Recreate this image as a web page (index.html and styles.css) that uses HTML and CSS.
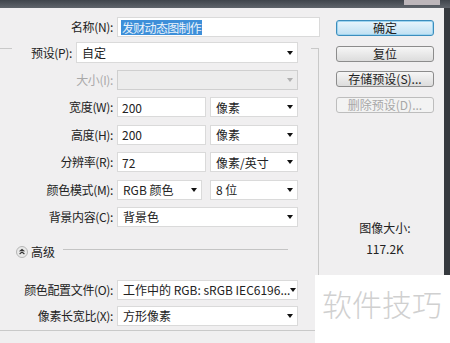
FILE: index.html
```html
<!DOCTYPE html>
<html lang="zh-CN">
<head>
    <meta charset="UTF-8">
    <title>新建</title>
    <link rel="stylesheet" href="styles.css">
</head>
<body>
    <div class="titlebar"><span class="titlebar-btn"></span></div>

    <div class="dialog">
        <div class="main">
            <div class="row name-row">
                <label class="lbl">名称(N):</label>
                <div class="field name-field"><span class="sel-text">发财动态图制作</span></div>
            </div>

            <fieldset class="group">
                <legend class="preset">
                    <label class="lbl preset-lbl">预设(P):</label>
                    <div class="field select preset-select">自定<i class="arrow"></i></div>
                </legend>

                <div class="rows">
                    <label class="lbl disabled">大小(I):</label>
                    <div class="field select is-disabled"><i class="arrow"></i></div>

                    <label class="lbl">宽度(W):</label>
                    <div class="pair">
                        <div class="field input">200</div>
                        <div class="field select unit">像素<i class="arrow"></i></div>
                    </div>

                    <label class="lbl">高度(H):</label>
                    <div class="pair">
                        <div class="field input">200</div>
                        <div class="field select unit">像素<i class="arrow"></i></div>
                    </div>

                    <label class="lbl">分辨率(R):</label>
                    <div class="pair">
                        <div class="field input">72</div>
                        <div class="field select unit">像素/英寸<i class="arrow"></i></div>
                    </div>

                    <label class="lbl">颜色模式(M):</label>
                    <div class="pair mode">
                        <div class="field select mode-select">RGB 颜色<i class="arrow"></i></div>
                        <div class="field select unit">8 位<i class="arrow"></i></div>
                    </div>

                    <label class="lbl">背景内容(C):</label>
                    <div class="field select">背景色<i class="arrow"></i></div>
                </div>

                <div class="advanced">
                    <svg class="adv-icon" width="12" height="12" viewBox="0 0 12 12">
                        <circle cx="6" cy="6" r="5.5" fill="#e9e9e9" stroke="#b5b5b5"/>
                        <path d="M3.6 5.4 L6 3.4 L8.4 5.4 M3.6 8 L6 6 L8.4 8" fill="none" stroke="#333" stroke-width="1.1"/>
                    </svg>
                    <span>高级</span>
                    <span class="adv-line"></span>
                </div>

                <div class="rows adv-rows">
                    <label class="lbl">颜色配置文件(O):</label>
                    <div class="field select">工作中的 RGB: sRGB IEC6196...<i class="arrow"></i></div>

                    <label class="lbl">像素长宽比(X):</label>
                    <div class="field select">方形像素<i class="arrow"></i></div>
                </div>
            </fieldset>
        </div>

        <div class="side">
            <button class="btn btn-default">确定</button>
            <button class="btn">复位</button>
            <button class="btn">存储预设(S)...</button>
            <button class="btn" disabled>删除预设(D)...</button>

            <div class="size-info">
                <div>图像大小:</div>
                <div>117.2K</div>
            </div>
        </div>
    </div>

    <div class="watermark">软件技巧</div>
</body>
</html>
```

FILE: styles.css
```css
* {
    box-sizing: border-box;
}

html, body {
    margin: 0;
}

body {
    width: 450px;
    height: 343px;
    overflow: hidden;
    position: relative;
    font-family: "Noto Sans CJK SC", "Noto Sans", sans-serif;
    font-size: 12px;
    color: #222;
    background-color: #f0eff0;
}

.titlebar {
    height: 8px;
    background: linear-gradient(#40454c, #5f646b);
    position: relative;
}

.titlebar-btn {
    position: absolute;
    left: 404px;
    top: 0;
    width: 36px;
    height: 5px;
    background-color: #bdb6ba;
}

.dialog {
    display: flex;
    height: 335px;
    border-right: 6px solid #35393e;
}

.main {
    width: 319px;
    padding-top: 9px;
}

/* Beschriftungen */
.lbl {
    text-align: right;
    line-height: 20px;
    white-space: nowrap;
    letter-spacing: -0.35px;
}

.lbl.disabled {
    color: #a9a9a9;
}

.field {
    height: 20px;
    background-color: #fff;
    border: 1px solid #dadada;
    display: flex;
    align-items: center;
    padding-left: 5px;
    white-space: nowrap;
    overflow: hidden;
}

.field.is-disabled {
    background-color: #ececec;
    border-color: #cfcfcf;
}

.field.is-disabled .arrow {
    border-top-color: #b0b0b0;
}

.arrow {
    margin-left: auto;
    margin-right: 4px;
    flex: none;
    width: 0;
    height: 0;
    border-left: 3.5px solid transparent;
    border-right: 3.5px solid transparent;
    border-top: 4px solid #111;
}

.name-row {
    display: grid;
    grid-template-columns: 113px 203px;
    column-gap: 4px;
}

.name-field {
    padding-left: 3px;
}

.sel-text {
    background-color: #3d8fd9;
    color: #eaf3fb;
    line-height: 15px;
    letter-spacing: -0.7px;
    padding: 0 1px;
}

/* Gruppe mit Vorgabe */
.group {
    margin: 5px 0 0 0;
    padding: 15px 0 4px 0;
    border: 1px solid #c9c9c9;
    border-left: none;
    min-width: 0;
}

.preset {
    margin-left: 12px;
    padding: 0 13px 0 0;
    height: 13px;
    display: flex;
    align-items: flex-start;
}

.preset-lbl {
    width: 60px;
    margin-right: 4px;
    height: 21px;
    line-height: 21px;
}

.preset-select {
    width: 222px;
    height: 21px;
    flex: none;
}

.rows {
    display: grid;
    grid-template-columns: 113px 181px;
    column-gap: 4px;
    row-gap: 7.4px;
}

.pair {
    display: flex;
    gap: 4px;
}

.pair .input {
    width: 89px;
    padding-left: 4px;
}

.pair .unit {
    width: 88px;
}

.pair.mode {
    gap: 8px;
}

.mode-select {
    width: 85px;
}

.advanced {
    display: flex;
    align-items: center;
    height: 20px;
    margin-top: 15px;
    padding-left: 16px;
    padding-right: 30px;
}

.adv-icon {
    margin-right: 3px;
}

.adv-line {
    flex: 1;
    height: 1px;
    margin-left: 8px;
    margin-top: -5px;
    background-color: #c4c4c4;
}

.adv-rows {
    margin-top: 18px;
    row-gap: 6px;
}

/* rechte Spalte */
.side {
    flex: 1;
    padding: 12px 0 0 17px;
    display: flex;
    flex-direction: column;
}

.btn {
    width: 98px;
    height: 16px;
    margin-bottom: 9.7px;
    padding: 0;
    font-family: inherit;
    font-size: 12px;
    line-height: 14px;
    color: #222;
    border: 1px solid #8c8c8c;
    border-radius: 3px;
    background: linear-gradient(#f6f6f6, #dcdcdc);
}

.btn-default {
    border-color: #3b8dbd;
    background: linear-gradient(#e9f5fc, #bfe0f2);
    box-shadow: inset 0 0 0 1px #9fd4ef;
}

.btn:disabled {
    color: #a8a8a8;
    border-color: #bdbdbd;
    background: #f3f3f3;
}

.size-info {
    margin-top: 94px;
    width: 98px;
    text-align: center;
    line-height: 21px;
}

.watermark {
    position: absolute;
    left: 315px;
    top: 275px;
    width: 135px;
    height: 68px;
    background-color: #fff;
    color: #d0d0d0;
    font-size: 30px;
    font-weight: 300;
    line-height: 32px;
    padding: 12px 0 0 7px;
    white-space: nowrap;
}
```
